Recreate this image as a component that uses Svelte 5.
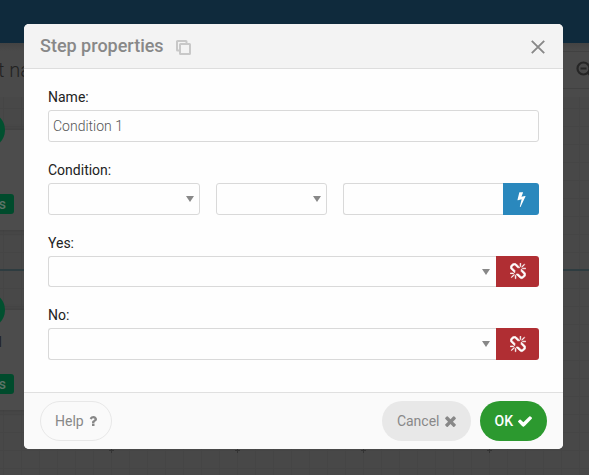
<script>
  let name = $state('Condition 1');
  let value = $state('');

  const branches = [
    { id: 'yes', label: 'Yes:' },
    { id: 'no', label: 'No:' }
  ];

  const icons = {
    bolt: 'M1333 566q18 20 7 44l-540 1157q-13 25-42 25-4 0-14-2-17-5-25.500-19t-4.500-30l197-808-406 101q-4 1-12 1-18 0-31-11-18-15-13-39l201-825q4-14 16-23t28-9h328q19 0 32 12.500t13 29.500q0 8-5 18l-171 463 396-98q8-2 12-2 19 0 34 15z',
    unlink: 'M503 1271l-256 256q-10 9-23 9-12 0-23-9-9-10-9-23t9-23l256-256q10-9 23-9t23 9q9 10 9 23t-9 23zm169 41v320q0 14-9 23t-23 9-23-9-9-23v-320q0-14 9-23t23-9 23 9 9 23zm-224-224q0 14-9 23t-23 9h-320q-14 0-23-9t-9-23 9-23 23-9h320q14 0 23 9t9 23zm1264 128q0 120-85 203l-147 146q-83 83-203 83-121 0-204-85l-334-335q-21-21-42-56l239-18 273 274q27 27 68 27.500t68-26.500l147-146q28-28 28-67 0-40-28-68l-274-275 18-239q35 21 56 42l336 336q84 86 84 204zm-617-724l-239 18-273-274q-28-28-68-28-39 0-68 27l-147 146q-28 28-28 67 0 40 28 68l274 274-18 240q-35-21-56-42l-336-336q-84-86-84-204 0-120 85-203l147-146q83-83 203-83 121 0 204 85l334 335q21 21 42 56zm633 84q0 14-9 23t-23 9h-320q-14 0-23-9t-9-23 9-23 23-9h320q14 0 23 9t9 23zm-544-544v320q0 14-9 23t-23 9-23-9-9-23v-320q0-14 9-23t23-9 23 9 9 23zm407 151l-256 256q-11 9-23 9t-23-9q-9-10-9-23t9-23l256-256q10-9 23-9t23 9q9 10 9 23t-9 23z',
    question: 'M1088 1256v240q0 16-12 28t-28 12h-240q-16 0-28-12t-12-28v-240q0-16 12-28t28-12h240q16 0 28 12t12 28zm316-600q0 54-15.500 101t-35 76.500-55 59.500-57.500 43.500-61 35.500q-41 23-68.500 65t-27.500 67q0 17-12 32.500t-28 15.500h-240q-15 0-25.500-18.500t-10.500-37.500v-45q0-83 65-156.500t143-108.500q59-27 84-56t25-76q0-42-46.500-74t-107.500-32q-65 0-108 29-35 25-107 115-13 16-31 16-12 0-25-8l-164-125q-13-10-15.500-25t5.500-28q160-266 464-266 80 0 161 31t146 83 106 127.500 41 158.500z',
    times: 'M1490 1322q0 40-28 68l-136 136q-28 28-68 28t-68-28l-294-294-294 294q-28 28-68 28t-68-28l-136-136q-28-28-28-68t28-68l294-294-294-294q-28-28-28-68t28-68l136-136q28-28 68-28t68 28l294 294 294-294q28-28 68-28t68 28l136 136q28 28 28 68t-28 68l-294 294 294 294q28 28 28 68z',
    check: 'M1671 566q0 40-28 68l-724 724-136 136q-28 28-68 28t-68-28l-136-136-362-362q-28-28-28-68t28-68l136-136q28-28 68-28t68 28l294 295 656-657q28-28 68-28t68 28l136 136q28 28 28 68z'
  };
</script>

{#snippet icon(d, viewBox, width, height)}
  <svg {viewBox} {width} {height} fill="currentColor" aria-hidden="true"><path {d} /></svg>
{/snippet}

<div class="page">
  <div class="navbar"></div>
  <div class="toolbar">
    <span class="doc">t name</span>
    <div class="tools">
      <svg width="18" height="18" viewBox="0 0 18 18" fill="none" stroke="currentColor" stroke-width="2.200" aria-hidden="true">
        <circle cx="7.500" cy="7.500" r="6" />
        <path d="M4.500 7.500h6M12 12L17 17" />
      </svg>
    </div>
  </div>
  <div class="canvas">
    <svg class="grid" width="100%" height="100%" aria-hidden="true">
      <defs>
        <pattern id="cells" x="3" y="11" width="18" height="18" patternUnits="userSpaceOnUse">
          <path d="M0 .5H18M.5 0V18" stroke="#454545" fill="none" />
        </pattern>
        <pattern id="marks" x="109" y="99" width="126" height="126" patternUnits="userSpaceOnUse">
          <path d="M0 2.500H5M2.500 0V5" stroke="#333" fill="none" />
        </pattern>
      </defs>
      <rect width="100%" height="100%" fill="url(#cells)" />
      <rect width="100%" height="100%" fill="url(#marks)" />
    </svg>
    <div class="wire"></div>
    <div class="node first"><span class="dot"></span><span class="tag">s</span></div>
    <div class="node second"><span class="dot"></span><span class="caption">l</span><span class="tag">s</span></div>
  </div>

  <div class="overlay">
    <div class="dialog" role="dialog" aria-labelledby="title">
      <header>
        <h2 id="title">Step properties</h2>
        <button class="plain copy" type="button" aria-label="Copy">
          <svg width="15" height="15" viewBox="0 0 15 15" fill="none" stroke="currentColor" stroke-width="2" aria-hidden="true">
            <rect x="4" y="4" width="10" height="10" rx=".5" />
            <path d="M3 10.500H1.500a.5.5 0 0 1-.5-.5V1.500a.5.5 0 0 1 .5-.5H10a.5.5 0 0 1 .5.5V3" />
          </svg>
        </button>
        <button class="plain close" type="button" aria-label="Close">
          <svg width="14" height="14" viewBox="0 0 14 14" fill="none" stroke="currentColor" stroke-width="1.900" aria-hidden="true">
            <path d="M.8.8L13.200 13.200M13.200.8L.8 13.200" />
          </svg>
        </button>
      </header>

      <form>
        <div class="field">
          <label for="name">Name:</label>
          <input id="name" type="text" bind:value={name} />
        </div>

        <div class="field">
          <label for="subject">Condition:</label>
          <div class="condition">
            <div class="select"><select id="subject"><option></option></select></div>
            <div class="select"><select aria-label="Operator"><option></option></select></div>
            <div class="group">
              <input type="text" aria-label="Value" bind:value />
              <button class="addon blue" type="button" aria-label="Insert dynamic value">
                {@render icon(icons.bolt, '448 0 896 1792', 9, 16)}
              </button>
            </div>
          </div>
        </div>

        {#each branches as branch (branch.id)}
          <div class="field">
            <label for={branch.id}>{branch.label}</label>
            <div class="group">
              <div class="select"><select id={branch.id}><option></option></select></div>
              <button class="addon red" type="button" aria-label="Unlink">
                {@render icon(icons.unlink, '64 0 1664 1792', 16, 17)}
              </button>
            </div>
          </div>
        {/each}
      </form>

      <footer>
        <button class="pill help" type="button">Help {@render icon(icons.question, '384 128 1024 1536', 8, 12)}</button>
        <button class="pill cancel" type="button">Cancel {@render icon(icons.times, '302 334 1188 1220', 11, 11)}</button>
        <button class="pill ok" type="button">OK {@render icon(icons.check, '121 334 1550 1188', 14, 11)}</button>
      </footer>
    </div>
  </div>
</div>

<style>
  :global(body) {
    margin: 0;
  }

  .page,
  .page :global(*) {
    box-sizing: border-box;
  }

  .page {
    position: relative;
    display: flex;
    flex-direction: column;
    min-height: 100vh;
    overflow: hidden;
    background: #484848;
    color: #222;
    font: 14px/20px Roboto, 'Liberation Sans', sans-serif;
  }

  .navbar {
    height: 43px;
    background: #0f2a3c;
  }

  .toolbar {
    display: flex;
    align-items: center;
    justify-content: space-between;
    height: 54px;
    background: linear-gradient(#434343, #4a4a4a 8px);
    color: #222;
  }

  .doc {
    margin-left: -2px;
    font-size: 20px;
    font-weight: 300;
  }

  .tools {
    display: flex;
    align-items: center;
    height: 38px;
    padding-left: 40px;
    margin-right: -6px;
    border: 1px solid #414141;
    color: #262626;
  }

  .canvas {
    position: relative;
    flex: 1;
  }

  .grid {
    position: absolute;
    inset: 0;
  }

  .wire {
    position: absolute;
    top: 172px;
    left: 0;
    right: 0;
    height: 2px;
    background: #2e3c40;
  }

  .node {
    position: absolute;
    left: -120px;
    width: 160px;
    height: 100px;
    background: #4c4c4c;
    box-shadow: 0 0 4px #3c3c3c;
  }

  .first {
    top: 33px;
  }

  .second {
    top: 213px;
  }

  .dot {
    position: absolute;
    top: -18px;
    left: 89px;
    width: 36px;
    height: 36px;
    border-radius: 50%;
    background: #00502f;
  }

  .caption {
    position: absolute;
    top: 22px;
    right: 38px;
    color: #222;
  }

  .tag {
    position: absolute;
    top: 64px;
    right: 26px;
    padding: 0 8px;
    border-radius: 3px;
    background: #004b2c;
    color: #5c7468;
    font-weight: 500;
  }

  .overlay {
    position: absolute;
    inset: 0;
    padding: 24px 26px 24px 24px;
  }

  .dialog {
    overflow: hidden;
    border-radius: 5px;
    background: #fefefe;
  }

  header {
    display: flex;
    align-items: center;
    height: 45px;
    padding: 0 18px 0 16px;
    border-bottom: 1px solid #ddd;
    background: #f3f3f3;
  }

  h2 {
    margin: 0;
    color: #888;
    font-size: 18px;
    font-weight: 500;
  }

  button {
    font: inherit;
    cursor: pointer;
  }

  .plain {
    display: flex;
    padding: 2px 0 0;
    border: 0;
    background: none;
  }

  .copy {
    margin-left: 12px;
    color: #c8c8c8;
  }

  .close {
    margin-left: auto;
    color: #888;
  }

  form {
    display: flex;
    flex-direction: column;
    gap: 18px;
    padding: 18px 24px 32px;
  }

  .field {
    display: flex;
    flex-direction: column;
    gap: 3px;
  }

  input,
  select {
    display: block;
    width: 100%;
    height: 32px;
    margin: 0;
    padding: 0 4px;
    border: 1px solid #d9d9d9;
    border-radius: 3px;
    background: #fefefe;
    color: #555;
    font: inherit;
  }

  input {
    font-weight: 300;
  }

  select {
    appearance: none;
  }

  .select {
    position: relative;
    flex: 1;
    min-width: 0;
  }

  .select::after {
    content: '';
    position: absolute;
    top: 13px;
    right: 6px;
    border: solid transparent;
    border-width: 6px 4px 0;
    border-top-color: #888;
    pointer-events: none;
  }

  .condition {
    display: grid;
    grid-template-columns: 152fr 111fr 196fr;
    gap: 16px;
  }

  .group {
    display: flex;
    min-width: 0;
  }

  .group input,
  .group select {
    border-right: 0;
    border-radius: 3px 0 0 3px;
  }

  .group input {
    flex: 1;
    min-width: 0;
  }

  .addon {
    display: flex;
    align-items: center;
    justify-content: center;
    flex: none;
    padding: 0;
    border: 0;
    border-radius: 0 3px 3px 0;
    color: #fefefe;
  }

  .blue {
    width: 36px;
    background: #2a88bd;
  }

  .red {
    width: 43px;
    background: #b02e33;
  }

  .red :global(path) {
    stroke: currentColor;
    stroke-width: 70;
  }

  .field:nth-child(3) select {
    height: 31px;
  }

  footer {
    display: flex;
    gap: 9px;
    padding: 8px 16px;
    border-top: 1px solid #e0e0e0;
    background: #fafafa;
  }

  .pill {
    display: flex;
    align-items: center;
    gap: 5px;
    height: 40px;
    padding: 0 15px;
    border: 0;
    border-radius: 20px;
  }

  .help {
    margin-right: auto;
    padding: 0 14px;
    border: 1px solid #e8e8e8;
    background: #fafafa;
    color: #888;
  }

  .cancel {
    background: #e8e8e8;
    color: #888;
  }

  .ok {
    background: #2c992f;
    color: #fefefe;
    font-weight: 500;
  }
</style>
